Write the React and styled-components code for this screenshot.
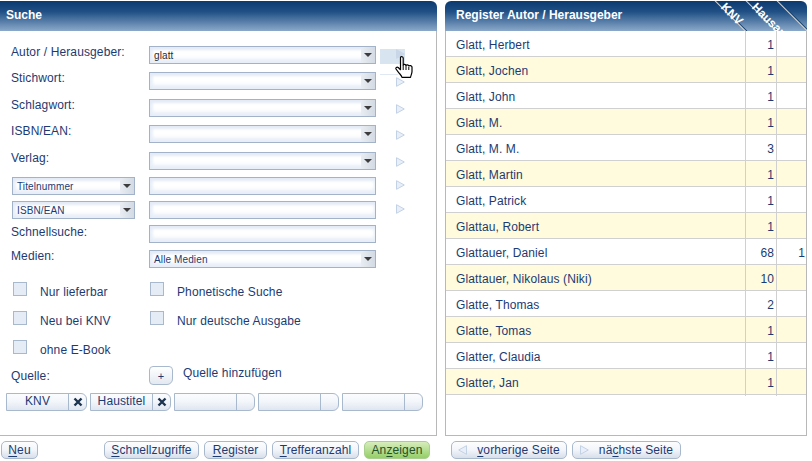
import React from 'react';
import styled, { createGlobalStyle } from 'styled-components';

const Global = createGlobalStyle`
  html, body {
    margin: 0;
    padding: 0;
    background: #fff;
  }
  body {
    font-family: "Liberation Sans", Arial, sans-serif;
    font-size: 12px;
    letter-spacing: 0.12px;
    color: #1d3a72;
  }
`;

const Page = styled.div`
  width: 812px;
  height: 461px;
  overflow: hidden;
  display: flex;
  gap: 8px;
  padding-top: 1px;
  box-sizing: border-box;
`;

const Panel = styled.section`
  width: ${p => p.$width}px;
  display: flex;
  flex-direction: column;
  flex: none;
`;

const Header = styled.header`
  position: relative;
  height: 30px;
  flex: none;
  overflow: hidden;
  box-sizing: border-box;
  display: flex;
  align-items: center;
  padding-left: ${p => p.$indent}px;
  padding-bottom: 2px;
  border-radius: ${p => (p.$both ? '6px 6px 0 0' : '0 6px 0 0')};
  background: linear-gradient(#0b3a70 0%, #1f4f85 35%, #8ba9c9 100%);
  color: #fff;
  font-weight: bold;
  font-size: 12px;
  letter-spacing: 0;
`;

const Body = styled.div`
  flex: 1;
  min-height: 0;
  box-sizing: border-box;
  border-right: 1px solid #b8b8b8;
  border-left: ${p => (p.$left ? '1px solid #b8b8b8' : 'none')};
  border-bottom: 1px solid #b8b8b8;
`;

const Footer = styled.footer`
  height: 25px;
  flex: none;
  box-sizing: border-box;
  display: flex;
  align-items: flex-start;
  padding: 5px 0 0 ${p => p.$indent}px;
  gap: 5px;
`;

const Form = styled.div`
  position: relative;
  padding: 15px 0 0 11px;
`;

const FormRow = styled.div`
  height: ${p => p.$h}px;
  display: flex;
  align-items: flex-start;
`;

const Label = styled.label`
  width: 138px;
  flex: none;
  line-height: 14px;
  margin-top: ${p => (p.$level ? 0 : -1)}px;
`;

const SmallSlot = styled.div`
  width: 138px;
  padding-left: 1px;
  box-sizing: border-box;
  flex: none;
`;

const FieldBox = styled.div`
  width: ${p => p.$width}px;
  height: 18px;
  flex: none;
  box-sizing: border-box;
  display: flex;
  align-items: center;
  border: 1px solid #a2b3c9;
  font-size: 10px;
  padding-left: 4px;
  background: #fff;
  box-shadow: inset 0 3px 3px #e4ebf6, inset 0 -4px 4px #e6edf7, inset 3px 0 3px #eef3fa;
`;

const FieldText = styled.span`
  flex: 1;
  color: ${p => (p.$dark ? '#2a2a2a' : '#1d3a72')};
`;

const DropButton = styled.span`
  width: 14px;
  align-self: stretch;
  flex: none;
  display: flex;
  align-items: center;
  justify-content: center;
  background: linear-gradient(90deg, #e9edf3, #d3dae3);

  &::after {
    content: '';
    border-left: 4px solid transparent;
    border-right: 4px solid transparent;
    border-top: 4px solid #3d3d3d;
  }
`;

const GoCell = styled.div`
  width: 25px;
  height: ${p => (p.$active ? 15 : 18)}px;
  margin: ${p => (p.$active ? 3 : 0)}px 0 0 4px;
  flex: none;
  display: flex;
  justify-content: flex-end;
  background: ${p => (p.$active ? '#d9e4f1' : 'transparent')};
  padding-top: ${p => (p.$active ? 0 : p.$offset)}px;
  box-sizing: border-box;
`;

const TriangleIcon = styled.svg`
  display: block;
  width: 9px;
  height: 10px;
  flex: none;
`;

const Triangle = ({ active, left }) => (
  <TriangleIcon viewBox="0 0 9 10">
    <path
      d={left ? 'M8.500.7v8.600L.7 5z' : 'M.5.7v8.600L8.300 5z'}
      fill={active ? '#c8d6e7' : '#e9eff8'}
      stroke={active ? '#c8d6e7' : '#c3d1e5'}
    />
  </TriangleIcon>
);

const HoverLine = styled.span`
  position: absolute;
  left: 380px;
  top: 43px;
  width: 18px;
  height: 1px;
  background: #dfe8f3;
`;

const Hand = styled.svg`
  position: absolute;
  left: 395px;
  top: 25px;
  width: 18px;
  height: 22px;
`;

const CheckGrid = styled.div`
  display: grid;
  grid-template-columns: 137px 1fr;
  grid-auto-rows: 29px;
  margin-left: 2px;
`;

const Check = styled.div`
  display: flex;
  align-items: flex-start;
`;

const Box = styled.span`
  width: 14px;
  height: 14px;
  flex: none;
  box-sizing: border-box;
  border: 1px solid #a9b9cd;
  background: #e6ecf5;
  margin-right: 13px;
`;

const CheckText = styled.span`
  line-height: 14px;
  margin-top: 3px;
`;

const SourceRow = styled.div`
  display: flex;
  align-items: flex-start;
  height: 27px;
  margin-top: -3px;
`;

const SourceLabel = styled.span`
  width: 138px;
  flex: none;
  line-height: 14px;
  margin-top: 3px;
`;

const AddButton = styled.button`
  width: 24px;
  height: 19px;
  padding: 0;
  flex: none;
  margin-right: 10px;
  font: 11px "Liberation Sans", Arial, sans-serif;
  color: #1d3a72;
  border: 1px solid #a9b9cd;
  border-radius: 4px 4px 6px 4px;
  background: linear-gradient(#fff, #e3e9f2);
`;

const AddText = styled.span`
  line-height: 14px;
`;

const Chips = styled.div`
  display: flex;
  gap: 3px;
  margin-left: -5px;
`;

const Chip = styled.div`
  width: 81px;
  height: 18px;
  box-sizing: border-box;
  display: flex;
  border: 1px solid #a9b9cd;
  border-radius: 0 6px 6px 0;
  background: linear-gradient(#fbfcfe 0%, #f2f5fa 50%, #dfe6f0 100%);
`;

const ChipName = styled.span`
  width: 61px;
  flex: none;
  text-align: center;
  line-height: 14px;
`;

const ChipClose = styled.span`
  flex: 1;
  border-left: 1px solid #a9b9cd;
  display: flex;
  align-items: center;
  justify-content: center;
`;

const Button = styled.button`
  height: 18px;
  width: ${p => p.$width}px;
  flex: none;
  padding: 0;
  margin-left: ${p => p.$gapLeft || 0}px;
  font: 12px "Liberation Sans", Arial, sans-serif;
  letter-spacing: 0.12px;
  color: ${p => (p.$green ? '#24502a' : '#1d3a72')};
  border: 1px solid ${p => (p.$green ? '#a9cf8e' : '#a9b9cd')};
  border-radius: 5px;
  background: ${p => (p.$green
    ? 'linear-gradient(#d7edbd, #94cf66)'
    : 'linear-gradient(#fdfdfe 0%, #f2f5fa 50%, #d7dfeb 100%)')};
  display: flex;
  align-items: center;
  justify-content: center;
  gap: 10px;

  u {
    text-decoration-thickness: 1px;
    text-underline-offset: 2px;
  }
`;

const Row = styled.div`
  height: 26px;
  box-sizing: border-box;
  display: grid;
  grid-template-columns: 299px 31px 30px;
  border-bottom: 1px solid #d0d0d0;
  background: ${p => (p.$odd ? '#fffbdc' : '#fff')};
`;

const Name = styled.div`
  padding: 1px 0 0 10px;
  line-height: 26px;
`;

const Count = styled.div`
  border-left: 1px solid #d0d0d0;
  text-align: right;
  line-height: 26px;
  padding: 1px ${p => p.$pad}px 0 0;
`;

const Slash = styled.span`
  position: absolute;
  top: -2px;
  left: ${p => p.$x}px;
  width: 46px;
  height: 1px;
  background: #d3d3d3;
  box-shadow: 0 -1px 0 #16426f;
  transform-origin: 0 0;
  transform: rotate(45deg);
`;

const Slanted = styled.span`
  position: absolute;
  left: ${p => p.$x}px;
  top: ${p => p.$y}px;
  font-size: 12px;
  font-weight: bold;
  transform-origin: 0 0;
  transform: rotate(45deg);
  white-space: nowrap;
`;

const CloseIcon = () => (
  <svg width="10" height="10" viewBox="0 0 10 10">
    <path d="M1.500 1.500l7 7M8.500 1.500l-7 7" stroke="#1c3450" strokeWidth="2.400" />
  </svg>
);

const fields = [
  { label: 'Autor / Herausgeber:', h: 26, text: 'glatt', drop: true, active: true },
  { label: 'Stichwort:', h: 27, drop: true, offset: 5 },
  { label: 'Schlagwort:', h: 26, drop: true, offset: 5 },
  { label: 'ISBN/EAN:', h: 27, drop: true, offset: 5 },
  { label: 'Verlag:', h: 25, drop: true, offset: 5 },
  { small: 'Titelnummer', h: 24, offset: 3 },
  { small: 'ISBN/EAN', h: 24, offset: 3 },
  { label: 'Schnellsuche:', h: 25, level: true },
  { label: 'Medien:', h: 32, text: 'Alle Medien', drop: true },
];

const register = [
  ['Glatt, Herbert', 1],
  ['Glatt, Jochen', 1],
  ['Glatt, John', 1],
  ['Glatt, M.', 1],
  ['Glatt, M. M.', 3],
  ['Glatt, Martin', 1],
  ['Glatt, Patrick', 1],
  ['Glattau, Robert', 1],
  ['Glattauer, Daniel', 68, 1],
  ['Glattauer, Nikolaus (Niki)', 10],
  ['Glatte, Thomas', 2],
  ['Glatte, Tomas', 1],
  ['Glatter, Claudia', 1],
  ['Glatter, Jan', 1],
];

export default function App() {
  return (
    <Page>
      <Global />
      <Panel $width={437}>
        <Header $indent={6}>Suche</Header>
        <Body>
          <Form>
            {fields.map((f, i) => (
              <FormRow key={i} $h={f.h}>
                {f.small ? (
                  <SmallSlot>
                    <FieldBox $width={123}>
                      <FieldText>{f.small}</FieldText>
                      <DropButton />
                    </FieldBox>
                  </SmallSlot>
                ) : (
                  <Label $level={f.level}>{f.label}</Label>
                )}
                <FieldBox $width={227}>
                  <FieldText $dark={f.text === 'glatt'}>{f.text}</FieldText>
                  {f.drop && <DropButton />}
                </FieldBox>
                {f.offset !== undefined && (
                  <GoCell $offset={f.offset}>
                    <Triangle />
                  </GoCell>
                )}
                {f.active && (
                  <GoCell $active>
                    <Triangle active />
                  </GoCell>
                )}
              </FormRow>
            ))}
            <HoverLine />
            <Hand viewBox="0 0 18 22">
              <path
                d="M5.500 1.200C6.300.3 8 .6 8.200 2v7c.6-1 2.400-1 2.800.5.600-1 2.400-.8 2.800.5.800-.8 2.900-.4 3.200 1v4.500c0 2-1 3.500-1.500 5.800H7c-.5-2-2-3-3.500-5L1 13c-.6-1.200.9-2.500 2.200-1.500l2.300 2.200V2.500z"
                fill="#fff"
                stroke="#000"
                strokeWidth="1.200"
                strokeLinejoin="round"
              />
              <path d="M8.200 9v5M11 9.500V14M13.800 11v3" stroke="#000" strokeWidth="1" fill="none" />
            </Hand>
            <CheckGrid>
              <Check><Box /><CheckText>Nur lieferbar</CheckText></Check>
              <Check><Box /><CheckText>Phonetische Suche</CheckText></Check>
              <Check><Box /><CheckText>Neu bei KNV</CheckText></Check>
              <Check><Box /><CheckText>Nur deutsche Ausgabe</CheckText></Check>
              <Check><Box /><CheckText>ohne E-Book</CheckText></Check>
            </CheckGrid>
            <SourceRow>
              <SourceLabel>Quelle:</SourceLabel>
              <AddButton>+</AddButton>
              <AddText>Quelle hinzufügen</AddText>
            </SourceRow>
            <Chips>
              <Chip><ChipName>KNV</ChipName><ChipClose><CloseIcon /></ChipClose></Chip>
              <Chip><ChipName>Haustitel</ChipName><ChipClose><CloseIcon /></ChipClose></Chip>
              <Chip><ChipName /><ChipClose /></Chip>
              <Chip><ChipName /><ChipClose /></Chip>
              <Chip><ChipName /><ChipClose /></Chip>
            </Chips>
          </Form>
        </Body>
        <Footer $indent={1}>
          <Button $width={37}><span><u>N</u>eu</span></Button>
          <Button $width={95} $gapLeft={61}><span><u>S</u>chnellzugriffe</span></Button>
          <Button $width={63}><span><u>R</u>egister</span></Button>
          <Button $width={87}><span><u>T</u>refferanzahl</span></Button>
          <Button $width={66} $green><span>An<u>z</u>eigen</span></Button>
        </Footer>
      </Panel>
      <Panel $width={362}>
        <Header $indent={11} $both>
          Register Autor / Herausgeber
          <Slash $x={269} />
          <Slash $x={300} />
          <Slash $x={331} />
          <Slanted $x={283} $y={-1}>KNV</Slanted>
          <Slanted $x={314} $y={-1}>Hausar</Slanted>
        </Header>
        <Body $left>
          {register.map(([name, knv, haus], i) => (
            <Row key={name} $odd={i % 2 === 1}>
              <Name>{name}</Name>
              <Count $pad={2}>{knv}</Count>
              <Count $pad={1}>{haus}</Count>
            </Row>
          ))}
        </Body>
        <Footer $indent={6}>
          <Button $width={116}><Triangle left /><span><u>v</u>orherige Seite</span></Button>
          <Button $width={109}><Triangle /><span>nä<u>c</u>hste Seite</span></Button>
        </Footer>
      </Panel>
    </Page>
  );
}
